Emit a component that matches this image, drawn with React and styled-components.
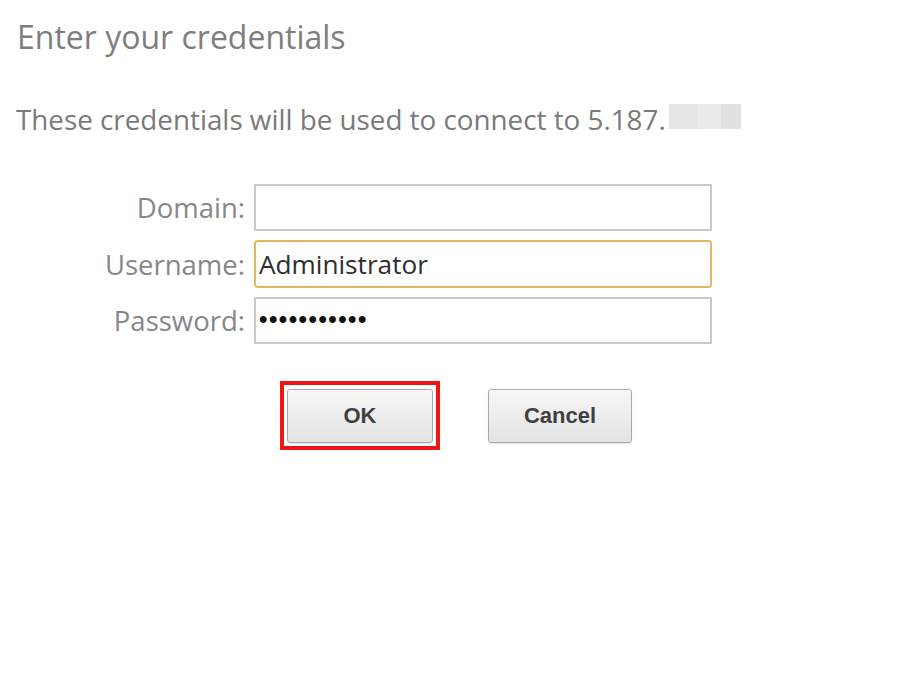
import React from "react";
import styled, { createGlobalStyle } from "styled-components";

const Global = createGlobalStyle`
  html, body { margin: 0; padding: 0; background: #ffffff; }
  body { font-family: "Open Sans", "Liberation Sans", sans-serif; }
`;

const Page = styled.div`
  width: 916px;
  height: 684px;
  box-sizing: border-box;
  padding: 17px 0 0 17px;
  background: #ffffff;
`;

const Title = styled.h1`
  margin: 0;
  font-family: "Open Sans", sans-serif;
  font-weight: 400;
  font-size: 32px;
  line-height: 40px;
  color: #7e7e7e;
`;

const Subtitle = styled.p`
  margin: 42px 0 0 -1px;
  font-family: "Open Sans", sans-serif;
  font-size: 27.8px;
  line-height: 40px;
  color: #7a7a7a;
  display: flex;
  align-items: flex-start;
`;

const Redacted = styled.span`
  display: inline-block;
  width: 72px;
  height: 25px;
  margin: 5px 0 0 3px;
  background: linear-gradient(
    90deg,
    #e6e6e6 0 40%,
    #ececec 40% 72%,
    #e1e1e1 72% 100%
  );
`;

const Form = styled.div`
  margin-top: 45px;
  display: grid;
  grid-template-columns: 228px 458px;
  column-gap: 9px;
  row-gap: 9px;
  align-items: center;
`;

const Label = styled.label`
  text-align: right;
  font-family: "Open Sans", sans-serif;
  font-size: 27.5px;
  color: #878787;
`;

const Field = styled.div`
  box-sizing: border-box;
  height: ${(p) => (p.$tall ? 48 : 47)}px;
  border: 2px solid ${(p) => (p.$focused ? "#e2b660" : "#c9c9c9")};
  border-radius: ${(p) => (p.$focused ? 4 : 1)}px;
  background: #ffffff;
  display: flex;
  align-items: center;
  padding-left: 3px;
  font-family: "Open Sans", sans-serif;
  font-size: 26.2px;
  color: #2e2e2e;
`;

const Dots = styled.span`
  font-family: "Liberation Sans", sans-serif;
  font-size: 24px;
  font-weight: 700;
  letter-spacing: 1.5px;
  color: #111;
  transform: translateY(-2px);
`;

const Buttons = styled.div`
  margin-top: 37px;
  padding-left: 263px;
  display: flex;
  align-items: flex-start;
  gap: 48px;
`;

const Marker = styled.div`
  display: flex;
  border: 4px solid #f01414;
  padding: 4px 3px 3px 3px;
`;

const Button = styled.button`
  box-sizing: border-box;
  width: ${(p) => p.$w}px;
  height: 54px;
  margin-top: ${(p) => (p.$offset ? 8 : 0)}px;
  border: 1px solid #a9a9a9;
  border-radius: 3px;
  background: linear-gradient(#f7f7f7, #e3e3e3);
  box-shadow: inset 0 1px 0 #ffffff, 0 1px 1px rgba(0, 0, 0, 0.12);
  font-family: "Liberation Sans", Arial, sans-serif;
  font-weight: 700;
  font-size: 22px;
  color: #3f3f3f;
  padding: 0;
`;

export default function App() {
  return (
    <>
      <Global />
      <Page>
        <Title>Enter your credentials</Title>
        <Subtitle>
          These credentials will be used to connect to 5.187.
          <Redacted />
        </Subtitle>
        <Form>
          <Label>Domain:</Label>
          <Field />
          <Label>Username:</Label>
          <Field $focused $tall>Administrator</Field>
          <Label>Password:</Label>
          <Field>
            <Dots>•••••••••••</Dots>
          </Field>
        </Form>
        <Buttons>
          <Marker>
            <Button $w={146}>OK</Button>
          </Marker>
          <Button $w={144} $offset>Cancel</Button>
        </Buttons>
      </Page>
    </>
  );
}
